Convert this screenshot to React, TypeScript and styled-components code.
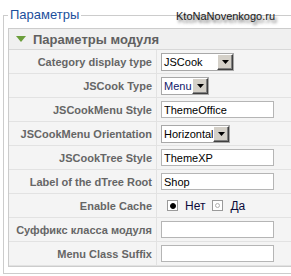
import React from 'react';
import styled, { createGlobalStyle } from 'styled-components';

const Global = createGlobalStyle`
  html, body { margin: 0; padding: 0; background: #fff; overflow: hidden; }
  body { font-family: "Liberation Sans", Arial, sans-serif; }
`;

const Page = styled.div`
  position: relative;
  width: 291px;
  height: 276px;
  padding: 7px 0 0 3px;
  box-sizing: border-box;
  overflow: hidden;
`;

const Fieldset = styled.fieldset`
  margin: 0;
  padding: 5px 0 6px 4px;
  border: 1px solid #cccccc;
  width: 420px;
  box-sizing: border-box;
`;

const Legend = styled.legend`
  padding: 0 2px;
  margin: 0;
  font-size: 13px;
  line-height: 16px;
  color: #1b4f9c;
`;

const Watermark = styled.div`
  position: absolute;
  top: 10px;
  left: 176px;
  font-size: 11px;
  line-height: 13px;
  color: #1a1a1a;
  text-shadow: 2px 3px 3px rgba(0, 0, 0, 0.55);
  white-space: nowrap;
`;

const Panel = styled.div`
  border: 1px solid #cccccc;
  background: #f4f4f4;
`;

const PanelHeader = styled.h3`
  margin: 0;
  height: 21px;
  box-sizing: border-box;
  display: flex;
  align-items: center;
  gap: 7px;
  padding-left: 7px;
  background: #f0f0f0;
  border-bottom: 1px solid #d8d8d8;
  font-size: 13px;
  font-weight: bold;
  color: #606060;
`;

const Row = styled.div`
  display: grid;
  grid-template-columns: 148px 1fr;
  height: 24px;
  box-sizing: border-box;
  border-bottom: 1px solid #e2e2e2;
`;

const KeyCell = styled.div`
  display: flex;
  align-items: center;
  justify-content: flex-end;
  padding-right: 4px;
  border-right: 1px solid #e2e2e2;
  font-size: 11px;
  font-weight: bold;
  color: #666666;
  white-space: nowrap;
`;

const ValueCell = styled.div`
  display: flex;
  align-items: center;
  padding-left: 4px;
`;

const SelectBox = styled.div<{ $w: number; $h: number }>`
  display: flex;
  align-items: stretch;
  width: ${(p) => p.$w}px;
  height: ${(p) => p.$h}px;
  box-sizing: border-box;
  border: 1px solid #a8a8a8;
  background: #fff;
`;

const SelectText = styled.span<{ $c?: string }>`
  flex: 1;
  display: flex;
  align-items: center;
  padding-left: 2px;
  font-size: 11px;
  color: ${(p) => p.$c || '#000'};
  overflow: hidden;
  white-space: nowrap;
`;

const DropButton = styled.span`
  width: 16px;
  box-sizing: border-box;
  display: flex;
  align-items: center;
  justify-content: center;
  background: #d4d0c8;
  border-style: solid;
  border-width: 1px;
  border-color: #ffffff #404040 #404040 #ffffff;
  box-shadow: inset -1px -1px 0 #808080;
`;

const TextInput = styled.input`
  width: 113px;
  height: 17px;
  box-sizing: border-box;
  border: 1px solid #b5b5b5;
  background: #fff;
  padding: 0 2px;
  margin: 0;
  font-family: "Liberation Sans", Arial, sans-serif;
  font-size: 11px;
  color: #000;
  outline: none;
`;

const RadioGroup = styled.div`
  display: flex;
  align-items: center;
  margin-left: 6px;
`;

const RadioBox = styled.span`
  width: 11px;
  height: 11px;
  box-sizing: border-box;
  border: 1px solid #9a9a9a;
  background: #fff;
  display: flex;
  align-items: center;
  justify-content: center;
`;

const RadioDot = styled.span<{ $on: boolean }>`
  width: ${(p) => (p.$on ? 6 : 5)}px;
  height: ${(p) => (p.$on ? 6 : 5)}px;
  border-radius: 50%;
  box-sizing: border-box;
  background: ${(p) => (p.$on ? '#000' : '#fff')};
  border: 1px solid ${(p) => (p.$on ? '#000' : '#b0b0b0')};
`;

const RadioLabel = styled.span<{ $gapAfter?: number }>`
  font-size: 12px;
  color: #0a0a3a;
  margin-left: 7px;
  margin-right: ${(p) => p.$gapAfter || 0}px;
`;

const Arrow = () => (
  <svg width="10" height="7" viewBox="0 0 10 7">
    <polygon points="0,0 10,0 5,6" fill="#6b9e3b" />
  </svg>
);

const Tri = () => (
  <svg width="7" height="4" viewBox="0 0 7 4">
    <polygon points="0,0 7,0 3.5,4" fill="#000" />
  </svg>
);

const Select = ({ w, h, value, color }: { w: number; h: number; value: string; color?: string }) => (
  <SelectBox $w={w} $h={h}>
    <SelectText $c={color}>{value}</SelectText>
    <DropButton>
      <Tri />
    </DropButton>
  </SelectBox>
);

export default function App() {
  return (
    <>
      <Global />
      <Page>
        <Fieldset>
          <Legend>Параметры</Legend>
          <Panel>
            <PanelHeader>
              <Arrow />
              Параметры модуля
            </PanelHeader>
            <Row>
              <KeyCell>Category display type</KeyCell>
              <ValueCell>
                <Select w={73} h={18} value="JSCook" />
              </ValueCell>
            </Row>
            <Row>
              <KeyCell>JSCook Type</KeyCell>
              <ValueCell>
                <Select w={48} h={18} value="Menu" color="#10186a" />
              </ValueCell>
            </Row>
            <Row>
              <KeyCell>JSCookMenu Style</KeyCell>
              <ValueCell>
                <TextInput readOnly defaultValue="ThemeOffice" />
              </ValueCell>
            </Row>
            <Row>
              <KeyCell>JSCookMenu Orientation</KeyCell>
              <ValueCell>
                <Select w={69} h={18} value="Horizontal" />
              </ValueCell>
            </Row>
            <Row>
              <KeyCell>JSCookTree Style</KeyCell>
              <ValueCell>
                <TextInput readOnly defaultValue="ThemeXP" />
              </ValueCell>
            </Row>
            <Row>
              <KeyCell>Label of the dTree Root</KeyCell>
              <ValueCell>
                <TextInput readOnly defaultValue="Shop" />
              </ValueCell>
            </Row>
            <Row>
              <KeyCell>Enable Cache</KeyCell>
              <ValueCell>
                <RadioGroup>
                  <RadioBox>
                    <RadioDot $on={true} />
                  </RadioBox>
                  <RadioLabel $gapAfter={7}>Нет</RadioLabel>
                  <RadioBox>
                    <RadioDot $on={false} />
                  </RadioBox>
                  <RadioLabel>Да</RadioLabel>
                </RadioGroup>
              </ValueCell>
            </Row>
            <Row>
              <KeyCell>Суффикс класса модуля</KeyCell>
              <ValueCell>
                <TextInput readOnly defaultValue="" />
              </ValueCell>
            </Row>
            <Row>
              <KeyCell>Menu Class Suffix</KeyCell>
              <ValueCell>
                <TextInput readOnly defaultValue="" />
              </ValueCell>
            </Row>
          </Panel>
        </Fieldset>
        <Watermark>KtoNaNovenkogo.ru</Watermark>
      </Page>
    </>
  );
}
